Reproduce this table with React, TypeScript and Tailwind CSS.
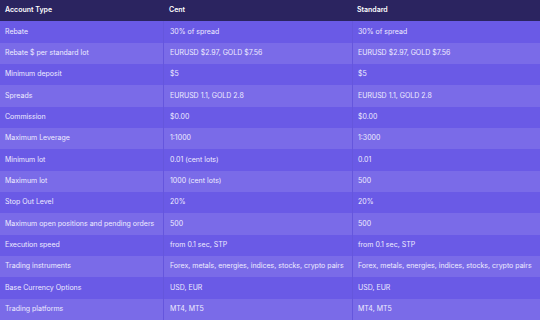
const ROWS: [string, string, string][] = [
  ["Rebate", "30% of spread", "30% of spread"],
  ["Rebate $ per standard lot", "EURUSD $2.97, GOLD $7.56", "EURUSD $2.97, GOLD $7.56"],
  ["Minimum deposit", "$5", "$5"],
  ["Spreads", "EURUSD 1.1, GOLD 2.8", "EURUSD 1.1, GOLD 2.8"],
  ["Commission", "$0.00", "$0.00"],
  ["Maximum Leverage", "1:1000", "1:3000"],
  ["Minimum lot", "0.01 (cent lots)", "0.01"],
  ["Maximum lot", "1000 (cent lots)", "500"],
  ["Stop Out Level", "20%", "20%"],
  ["Maximum open positions and pending orders", "500", "500"],
  ["Execution speed", "from 0.1 sec, STP", "from 0.1 sec, STP"],
  ["Trading instruments", "Forex, metals, energies, indices, stocks, crypto pairs", "Forex, metals, energies, indices, stocks, crypto pairs"],
  ["Base Currency Options", "USD, EUR", "USD, EUR"],
  ["Trading platforms", "MT4, MT5", "MT4, MT5"],
];

export default function App() {
  return (
    <div className="h-[320px] w-[540px] overflow-hidden bg-[#6a5ae6] font-['Inter',sans-serif] text-[7px] text-[#eeebff]">
      <div className="grid h-full grid-cols-[163px_189px_188px] grid-rows-[repeat(15,minmax(0,1fr))]">
        <div className="col-span-3 grid grid-cols-subgrid bg-[#2b2460] font-semibold text-white">
          <div className="flex items-center pl-[5px]">Account Type</div>
          <div className="flex items-center pl-[6px]">Cent</div>
          <div className="flex items-center pl-[5px]">Standard</div>
        </div>
        {ROWS.map((row, i) => (
          <div
            key={row[0]}
            className={`col-span-3 grid grid-cols-subgrid ${i % 2 === 0 ? "bg-[#6a5ae6]" : "bg-[#7a6be8]"}`}
          >
            <div className="flex items-center pl-[5px]">{row[0]}</div>
            <div className="flex items-center border-l border-[#6556dd] pl-[6px]">{row[1]}</div>
            <div className="flex items-center border-l border-[#6556dd] pl-[5px]">{row[2]}</div>
          </div>
        ))}
      </div>
    </div>
  );
}
